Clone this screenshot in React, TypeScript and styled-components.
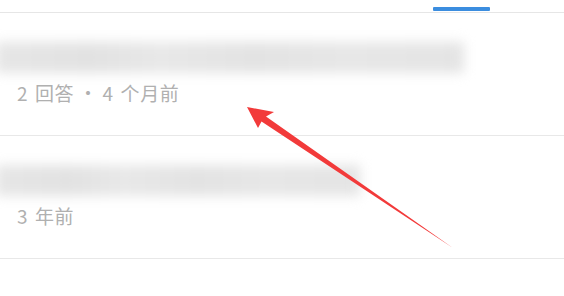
import React from "react";
import styled, { createGlobalStyle } from "styled-components";

const Global = createGlobalStyle`
  html, body { margin: 0; padding: 0; background: #ffffff; }
  body { font-family: "Noto Sans CJK SC", "Noto Sans", sans-serif; }
`;

const Page = styled.div`
  position: relative;
  width: 564px;
  height: 296px;
  overflow: hidden;
  background: #ffffff;
`;

const TabBar = styled.div`
  position: relative;
  height: 12px;
  border-bottom: 1px solid #e6e6e6;
`;

const TabIndicator = styled.div`
  position: absolute;
  left: 433px;
  top: 7px;
  width: 57px;
  height: 4px;
  background: #3b8ddf;
  border-radius: 1px;
`;

const List = styled.div`
  display: flex;
  flex-direction: column;
`;

const Item = styled.div`
  height: 123px;
  box-sizing: border-box;
  border-bottom: 1px solid #e8e8e8;
  display: flex;
  flex-direction: column;
  padding-top: 29px;
`;

const BlurTitle = styled.div<{ $w: number }>`
  width: ${(p) => p.$w}px;
  height: 31px;
  background: linear-gradient(
    90deg,
    #e6e6e6 0%,
    #e2e2e2 20%,
    #e8e8e8 35%,
    #e3e3e3 55%,
    #e7e7e7 75%,
    #e4e4e4 100%
  );
  filter: blur(6px);
  margin-left: -4px;
`;

const Meta = styled.div`
  margin-top: 9px;
  padding-left: 17px;
  font-size: 19px;
  line-height: 22px;
  letter-spacing: 0.6px;
  word-spacing: 2px;
  color: #b0b0b0;
  white-space: nowrap;
`;

const ArrowLayer = styled.svg`
  position: absolute;
  left: 0;
  top: 0;
  width: 564px;
  height: 296px;
  pointer-events: none;
`;

export default function App() {
  return (
    <>
      <Global />
      <Page>
        <TabBar>
          <TabIndicator />
        </TabBar>
        <List>
          <Item>
            <BlurTitle $w={468} />
            <Meta>{"2 回答\u2009·\u20094 个月前"}</Meta>
          </Item>
          <Item>
            <BlurTitle $w={364} />
            <Meta>3 年前</Meta>
          </Item>
        </List>
        <ArrowLayer viewBox="0 0 564 296">
          <polygon
            points="247,107 274,112 266,116.5 453,248 261.5,121.5 258,128"
            fill="#f23a3a"
          />
        </ArrowLayer>
      </Page>
    </>
  );
}
